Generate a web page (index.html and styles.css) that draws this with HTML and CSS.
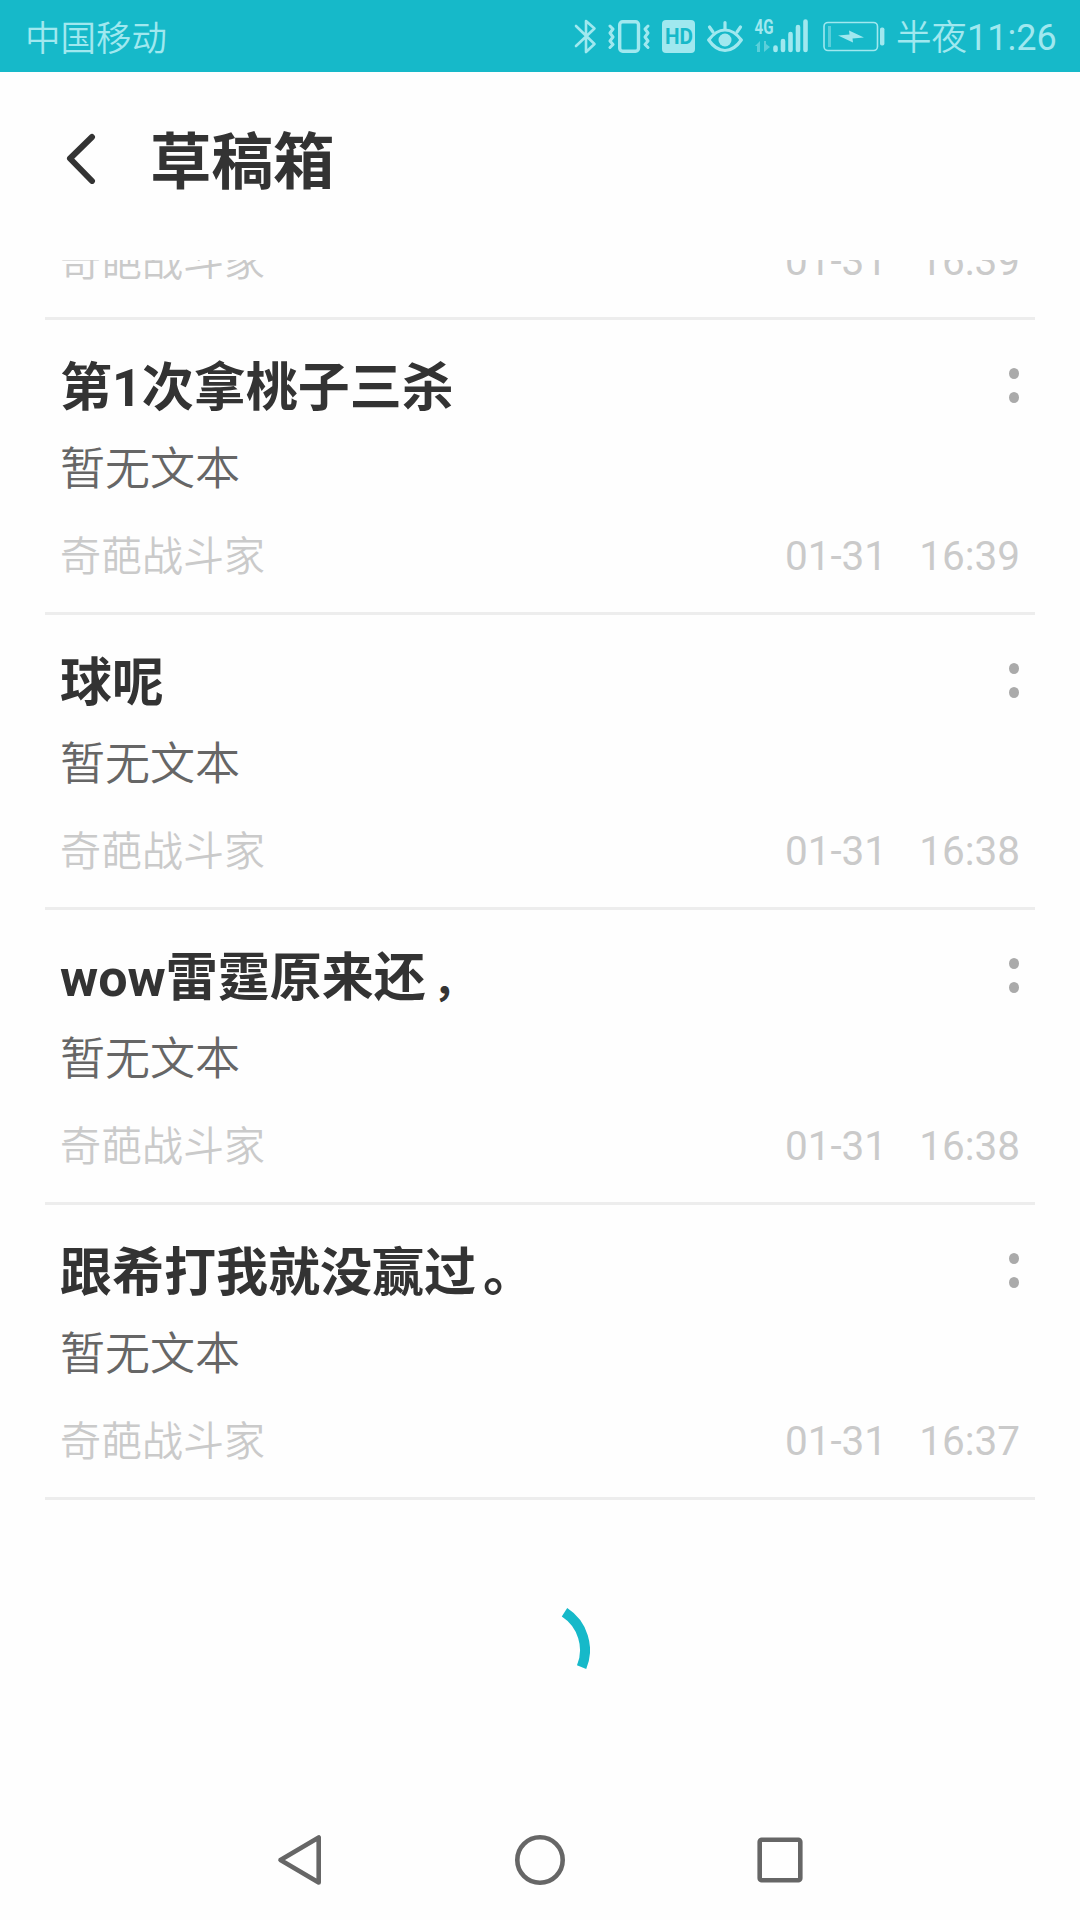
FILE: index.html
```
<!DOCTYPE html>
<html lang="zh-CN">
<head>
    <meta charset="UTF-8">
    <title>草稿箱</title>
    <link rel="stylesheet" href="styles.css">
</head>
<body>
    <div class="status-bar">
        <span class="carrier">中国移动</span>
        <div class="status-icons">
            <!-- bluetooth -->
            <svg width="23" height="72" viewBox="574 0 23 72">
                <path class="line" stroke-width="2.6" d="M576 26 L594.500 44 L586 52 V21 L594.500 28.500 L576 46"/>
            </svg>
            <!-- vibrate -->
            <svg width="43" height="72" viewBox="608 0 43 72">
                <rect class="line" stroke-width="3.400" x="619.700" y="21.700" width="18.800" height="29.600" rx="3"/>
                <path class="line" stroke-width="3" d="M610 26 l3 3 l-3 4 l3 4 l-3 4 l3 3.500 l-3 3"/>
                <path class="line" stroke-width="3" d="M648 26 l-3 3 l3 4 l-3 4 l3 4 l-3 3.500 l3 3"/>
            </svg>
            <!-- hd -->
            <svg width="34" height="72" viewBox="662 0 34 72">
                <rect class="solid" x="662" y="20" width="33" height="33" rx="4"/>
                <text class="hd" x="665" y="44" textLength="28" lengthAdjust="spacingAndGlyphs">HD</text>
            </svg>
            <!-- eye comfort -->
            <svg width="36" height="72" viewBox="707 0 36 72">
                <path class="line" stroke-width="3.200" d="M708.700 40 Q716 30 725 30 Q734 30 741.300 40 Q734 50.500 725 50.500 Q716 50.500 708.700 40 Z"/>
                <circle class="solid" cx="725" cy="40" r="6.500"/>
                <path class="line" stroke-width="3.200" d="M725 29 V22.500 M713 32 L709.500 27 M737 32 L740.500 27"/>
            </svg>
            <!-- signal -->
            <svg width="58" height="72" viewBox="754 0 58 72">
                <text class="network" x="754.500" y="34" textLength="19" lengthAdjust="spacingAndGlyphs">4G</text>
                <path class="dim" d="M755 46 L760 41 V52 H757 V46 Z M764 41 H766 V44 L770 47 L764 52 Z"/>
                <path class="line" stroke-width="4.600" d="M775.500 47.500 V50 M783 41 V50 M790.500 34 V50 M798 27 V50 M805.500 21.500 V50"/>
            </svg>
            <!-- battery -->
            <svg width="62" height="72" viewBox="823 0 62 72">
                <rect class="line" stroke-width="1.600" x="824" y="22.500" width="53.500" height="28" rx="4"/>
                <rect class="dim" x="828" y="26" width="3" height="21"/>
                <rect class="solid" x="880" y="27.500" width="4.400" height="18" rx="1.800"/>
                <path class="solid" d="M838 35.500 L849.500 34.500 L849 30.500 L864 37.500 L852.500 38.500 L853 42.500 Z"/>
            </svg>
        </div>
        <span class="clock">半夜<b>11:26</b></span>
    </div>

    <header class="header">
        <svg class="back" width="32" height="52" viewBox="0 0 32 52">
            <path d="M28 5 L6 26.500 L28 49"/>
        </svg>
        <h1>草稿箱</h1>
    </header>

    <main class="drafts">
        <div class="draft scrolled">
            <div class="draft-meta">
                <span>奇葩战斗家</span>
                <span class="time"><span>01-31</span><span>16:39</span></span>
            </div>
        </div>

        <div class="draft">
            <div class="draft-head">
                <h2>第1次拿桃子三杀</h2>
                <div class="more"><i></i><i></i></div>
            </div>
            <p>暂无文本</p>
            <div class="draft-meta">
                <span>奇葩战斗家</span>
                <span class="time"><span>01-31</span><span>16:39</span></span>
            </div>
        </div>

        <div class="draft">
            <div class="draft-head">
                <h2>球呢</h2>
                <div class="more"><i></i><i></i></div>
            </div>
            <p>暂无文本</p>
            <div class="draft-meta">
                <span>奇葩战斗家</span>
                <span class="time"><span>01-31</span><span>16:38</span></span>
            </div>
        </div>

        <div class="draft">
            <div class="draft-head">
                <h2>wow雷霆原来还<span class="comma">，</span></h2>
                <div class="more"><i></i><i></i></div>
            </div>
            <p>暂无文本</p>
            <div class="draft-meta">
                <span>奇葩战斗家</span>
                <span class="time"><span>01-31</span><span>16:38</span></span>
            </div>
        </div>

        <div class="draft">
            <div class="draft-head">
                <h2>跟希打我就没赢过<span class="stop">。</span></h2>
                <div class="more"><i></i><i></i></div>
            </div>
            <p>暂无文本</p>
            <div class="draft-meta">
                <span>奇葩战斗家</span>
                <span class="time"><span>01-31</span><span>16:37</span></span>
            </div>
        </div>

        <div class="loading">
            <svg width="100" height="100" viewBox="0 0 100 100">
                <path d="M74.500 12.300 A45 45 0 0 1 91.600 67.200"/>
            </svg>
        </div>
    </main>

    <nav class="nav-bar">
        <svg width="52" height="52" viewBox="0 0 52 52">
            <path d="M44.700 3.500 V48.500 L6.500 26 Z"/>
        </svg>
        <svg width="52" height="52" viewBox="0 0 52 52">
            <circle cx="26" cy="26" r="22.700"/>
        </svg>
        <svg width="52" height="52" viewBox="0 0 52 52">
            <rect x="5.700" y="5.700" width="40.600" height="40.600" rx="2"/>
        </svg>
    </nav>
</body>
</html>
```
FILE: styles.css
```
* {
    box-sizing: border-box;
    margin: 0;
    padding: 0;
}

body {
    display: flex;
    flex-direction: column;
    width: 1080px;
    height: 1920px;
    overflow: hidden;
    background-color: #fefefe;
    font-family: Roboto, "Noto Sans CJK SC", sans-serif;
    color: #333;
}

svg {
    display: block;
}

/* Status bar */
.status-bar {
    display: flex;
    align-items: center;
    height: 72px;
    padding: 0 25px 0 25px;
    background-color: #16b9c9;
    color: #a0e8ef;
    font-size: 35.5px;
    font-weight: 350;
    line-height: 72px;
    white-space: nowrap;
}

.carrier {
    padding-top: 5px;
}

.status-icons {
    display: flex;
    gap: 11px;
    margin-left: auto;
    margin-right: 11px;
}

.clock {
    width: 159px;
    padding-top: 4px;
}

.clock b {
    font-size: 36px;
    font-weight: 400;
}

.line {
    fill: none;
    stroke: #a0e8ef;
    stroke-linecap: round;
    stroke-linejoin: round;
}

.solid {
    fill: #a0e8ef;
}

.dim {
    fill: #5bcfda;
}

.hd {
    fill: #16b9c9;
    font-size: 22px;
    font-weight: 700;
}

.network {
    fill: #a0e8ef;
    font-size: 20px;
    font-weight: 700;
}

/* Page header */
.header {
    display: flex;
    align-items: center;
    height: 188px;
    padding: 0 64px 16px;
}

.back {
    margin-right: 54px;
}

.back path {
    fill: none;
    stroke: #333;
    stroke-width: 6;
    stroke-linecap: round;
    stroke-linejoin: round;
}

h1 {
    padding-top: 9px;
    font-size: 61.5px;
    font-weight: 700;
    line-height: 80px;
}

/* Draft list */
.drafts {
    flex: 1;
    overflow: hidden;
    padding: 0 45px;
}

.draft {
    display: flex;
    flex-direction: column;
    height: 295px;
    padding: 29px 15px 0 15px;
    border-bottom: 3px solid #ededed;
}

.scrolled {
    height: 60px;
    padding-top: 0;
    justify-content: flex-end;
}

.draft-head {
    display: flex;
    justify-content: space-between;
}

h2 {
    font-size: 52px;
    font-weight: 700;
    line-height: 80px;
}

.comma {
    margin-left: 7px;
    font-size: 42px;
    line-height: 1;
}

.stop {
    margin-left: 7px;
}

.more {
    display: flex;
    flex-direction: column;
    gap: 13px;
    padding-top: 19px;
    padding-right: 1px;
}

.more i {
    width: 10px;
    height: 11px;
    border-radius: 50%;
    background-color: #aaa;
}

.draft p {
    font-size: 45px;
    font-weight: 350;
    line-height: 60px;
    margin-top: 11px;
    color: #666;
}

.draft-meta {
    display: flex;
    justify-content: space-between;
    margin-top: auto;
    margin-bottom: 25px;
    font-size: 41px;
    font-weight: 350;
    line-height: 60px;
    color: #cacaca;
}

.time {
    display: flex;
    gap: 32px;
    font-size: 40.5px;
    font-weight: 400;
    line-height: 58px;
}

/* Loading spinner */
.loading {
    display: flex;
    justify-content: center;
    padding-top: 100px;
}

.loading path {
    fill: none;
    stroke: #16b9c9;
    stroke-width: 10;
}

/* System navigation */
.nav-bar {
    display: flex;
    justify-content: center;
    align-items: center;
    gap: 188px;
    height: 120px;
}

.nav-bar svg {
    fill: none;
    stroke: #666;
    stroke-width: 4.6;
    stroke-linejoin: round;
}
```
